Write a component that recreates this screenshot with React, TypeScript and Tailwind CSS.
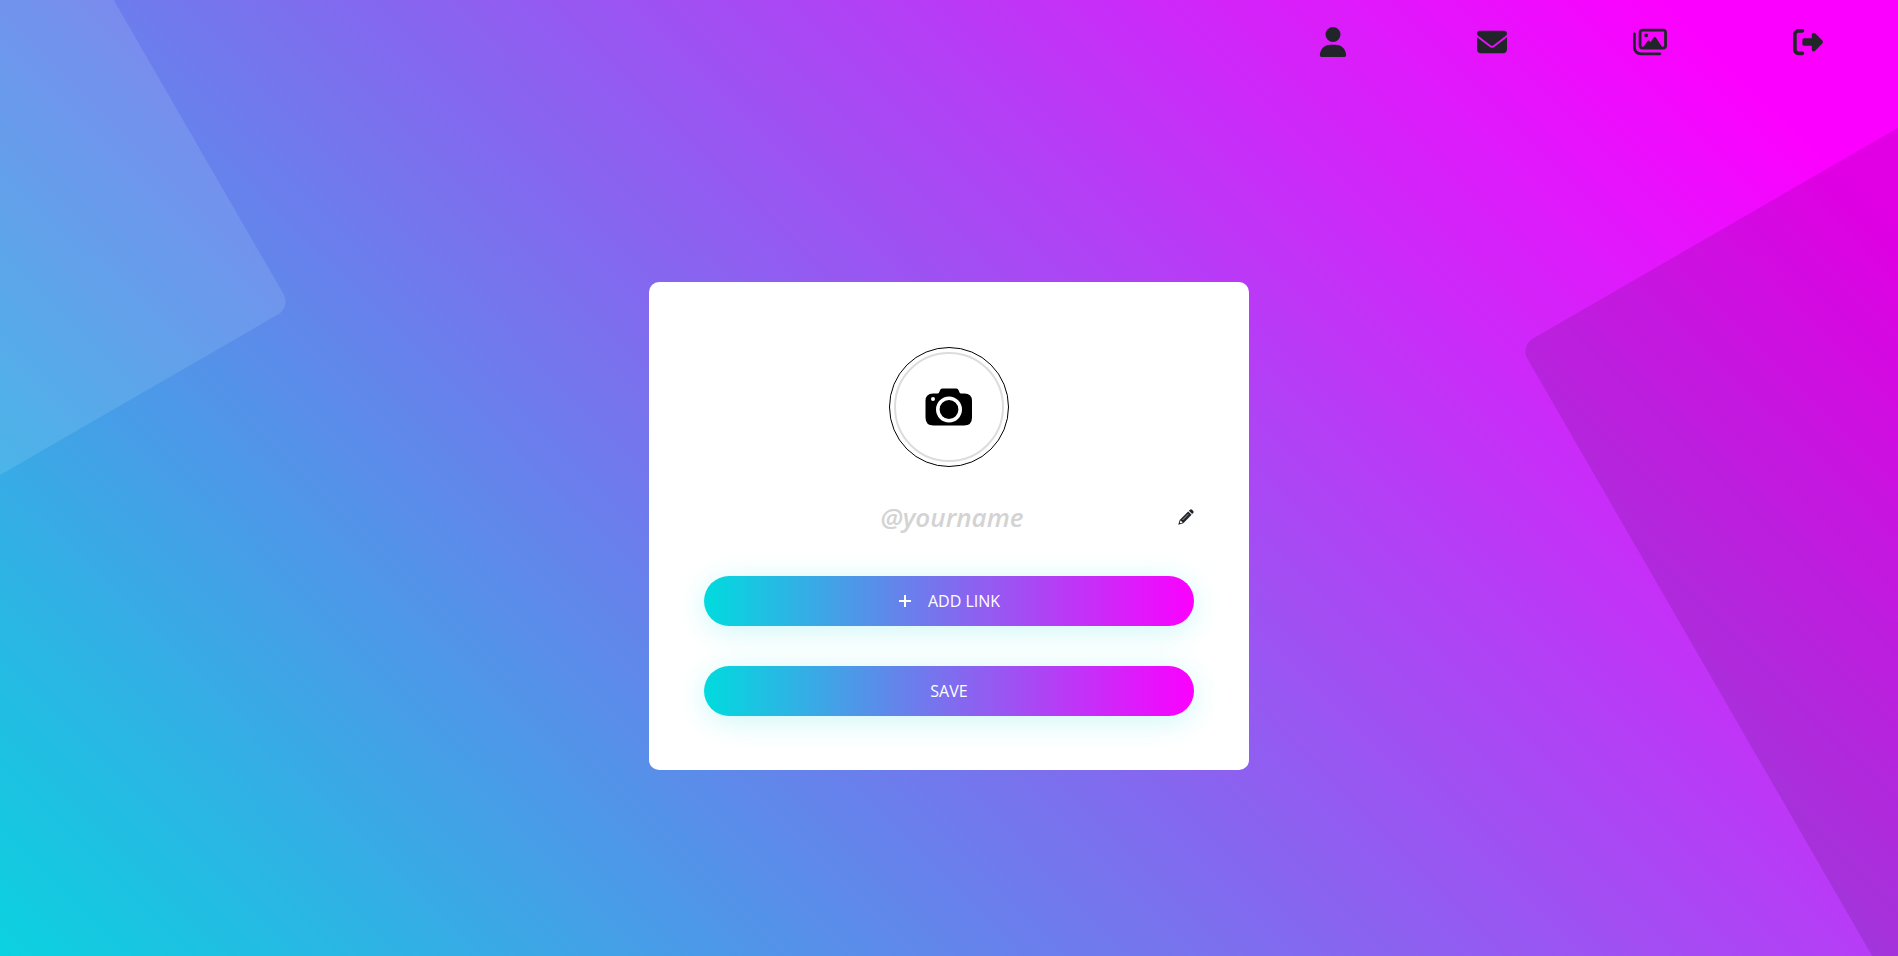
import { FaEnvelope, FaRegImages, FaRightFromBracket, FaUser } from 'react-icons/fa6';

const navItems = [
  { label: 'Profile', Icon: FaUser, size: 'size-[30px]' },
  { label: 'Messages', Icon: FaEnvelope, size: 'size-[30px]' },
  { label: 'Gallery', Icon: FaRegImages, size: 'size-[34px]' },
  { label: 'Log out', Icon: FaRightFromBracket, size: 'size-[30px]' },
];

const buttonClass =
  'flex h-[50px] w-full cursor-pointer items-center justify-center rounded-full bg-[linear-gradient(90deg,#00dbde,#fc00ff)] text-base text-white uppercase shadow-[0_5px_30px_rgba(3,216,222,0.2)]';

function CameraIcon() {
  return (
    <svg viewBox="0 0 48 38" className="w-12" aria-hidden="true">
      <path
        d="M8 5.500h4.500q1.300 0 1.800-1.600l.7-1.700Q15.600.5 17.300.5h14q1.700 0 2.300 1.700l.7 1.700q.5 1.600 1.800 1.600H39.500q7.500 0 7.500 7.500v16.500q0 8-8 8H8.500q-8 0-8-8V13Q.5 5.500 8 5.500z"
        fill="#000"
      />
      <circle cx="24" cy="21.500" r="11.200" fill="none" stroke="#fff" strokeWidth="3.600" />
      <circle cx="8" cy="11" r="2" fill="#fff" />
    </svg>
  );
}

function PencilIcon() {
  return (
    <svg viewBox="0 0 16 16" className="size-4" aria-hidden="true">
      <path
        d="M10.900 1.800 12 .8q1.100-.9 2.100 0l1.100 1.100q.9 1.100 0 2.100l-1 1.100z"
        fill="currentColor"
      />
      <path
        d="M10.200 2.400 13.600 5.800 5.300 14.200.2 15.800 1.700 10.900z"
        fill="currentColor"
      />
      <path d="M2.600 11.500 4.700 13.500 2.700 14.300 1.800 13.500z" fill="#fff" />
      <path d="M4.500 11 10.300 5.200" stroke="#fff" strokeWidth=".6" />
    </svg>
  );
}

export default function App() {
  return (
    <div className="relative flex min-h-screen flex-col overflow-hidden bg-[linear-gradient(45deg,#00dbde_-4%,#fc00ff_92%)] font-['Open_Sans',sans-serif] text-[#212529]">
      <div className="absolute -top-[293px] -left-[309px] size-[600px] origin-bottom-right -rotate-30 rounded-[15px] bg-[#e0ffff]/12" />
      <div className="absolute top-[346px] -right-[622px] size-[1000px] origin-top-left -rotate-30 rounded-[15px] bg-black/11" />

      <header className="relative mb-3 flex h-[84px] justify-end">
        <nav className="mr-[11px] grid w-1/3 grid-cols-4">
          {navItems.map(({ label, Icon, size }) => (
            <a key={label} href="#" aria-label={label} className="flex items-center justify-center">
              <Icon className={size} />
            </a>
          ))}
        </nav>
      </header>

      <main className="relative flex flex-1 items-center justify-center">
        <form className="flex w-[600px] flex-col items-center rounded-[10px] bg-white px-[55px] pt-[65px] pb-[54px]">
          <button
            type="button"
            aria-label="Upload photo"
            className="flex size-[120px] cursor-pointer items-center justify-center rounded-full border border-black p-1"
          >
            <span className="flex size-full items-center justify-center rounded-full border-2 border-[#dcdcdc]">
              <CameraIcon />
            </span>
          </button>

          <div className="mt-[30px] mb-[39px] flex h-10 w-full items-center">
            <input
              type="text"
              aria-label="Your name"
              placeholder="@yourname"
              className="min-w-0 flex-1 pl-[22px] text-center text-[26px] font-semibold italic outline-none placeholder:text-[#d3d3d3]"
            />
            <button type="button" aria-label="Edit name" className="cursor-pointer">
              <PencilIcon />
            </button>
          </div>

          <div className="flex w-full flex-col gap-10">
            <button type="button" className={buttonClass}>
              <svg viewBox="0 0 14 14" className="mr-4 w-3.5" aria-hidden="true">
                <path d="M7 1v12M1 7h12" stroke="currentColor" strokeWidth="2" />
              </svg>
              Add link
            </button>
            <button type="submit" className={buttonClass}>
              Save
            </button>
          </div>
        </form>
      </main>
    </div>
  );
}
